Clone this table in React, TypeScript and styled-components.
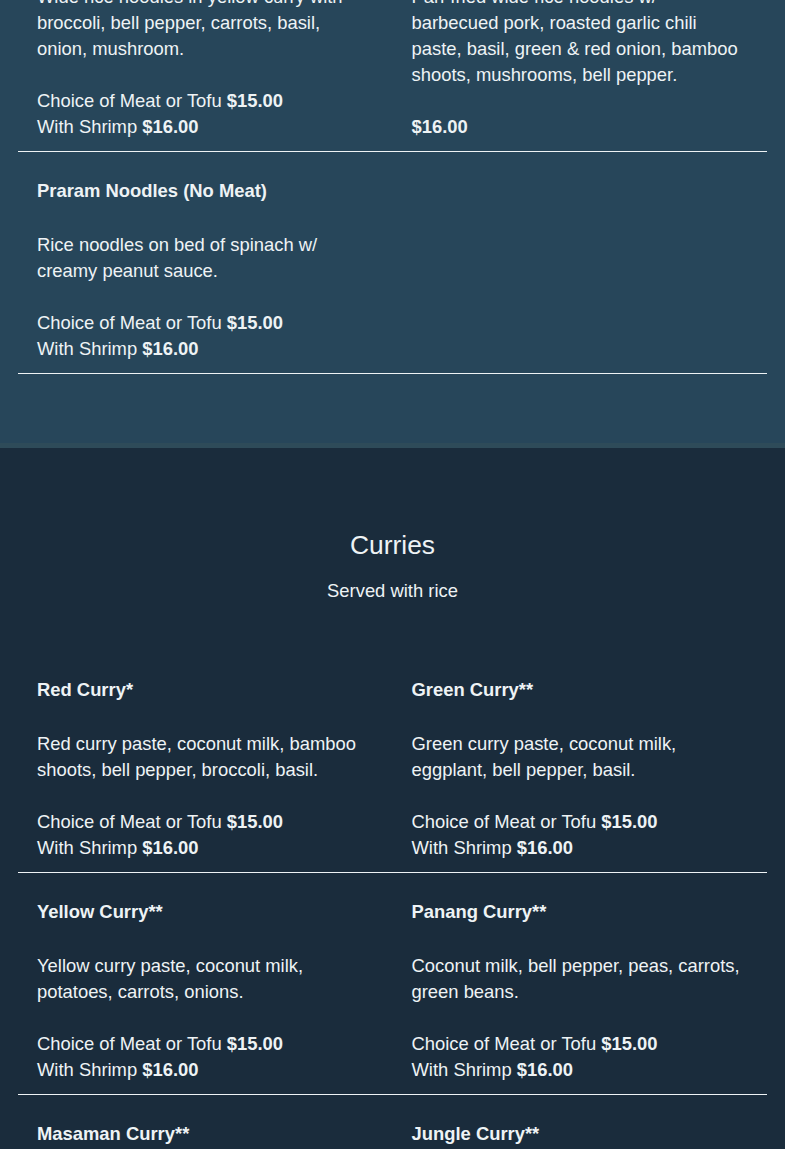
import React from 'react';
import styled, { createGlobalStyle } from 'styled-components';

interface Dish {
  name: string;
  desc: string;
  tofu?: string;
  shrimp?: string;
  only?: string;
}

const noodles: Dish[][] = [
  [
    {
      name: 'Curry Noodles',
      desc: 'Wide rice noodles in yellow curry with broccoli, bell pepper, carrots, basil, onion, mushroom.',
      tofu: '$15.00',
      shrimp: '$16.00'
    },
    {
      name: 'Drunken Noodles (Pad Kee Mao)',
      desc: 'Pan-fried wide rice noodles w/ barbecued pork, roasted garlic chili paste, basil, green & red onion, bamboo shoots, mushrooms, bell pepper.',
      only: '$16.00'
    }
  ],
  [
    {
      name: 'Praram Noodles (No Meat)',
      desc: 'Rice noodles on bed of spinach w/ creamy peanut sauce.',
      tofu: '$15.00',
      shrimp: '$16.00'
    }
  ]
];

const curries: Dish[][] = [
  [
    {
      name: 'Red Curry*',
      desc: 'Red curry paste, coconut milk, bamboo shoots, bell pepper, broccoli, basil.',
      tofu: '$15.00',
      shrimp: '$16.00'
    },
    {
      name: 'Green Curry**',
      desc: 'Green curry paste, coconut milk, eggplant, bell pepper, basil.',
      tofu: '$15.00',
      shrimp: '$16.00'
    }
  ],
  [
    {
      name: 'Yellow Curry**',
      desc: 'Yellow curry paste, coconut milk, potatoes, carrots, onions.',
      tofu: '$15.00',
      shrimp: '$16.00'
    },
    {
      name: 'Panang Curry**',
      desc: 'Coconut milk, bell pepper, peas, carrots, green beans.',
      tofu: '$15.00',
      shrimp: '$16.00'
    }
  ],
  [
    {
      name: 'Masaman Curry**',
      desc: 'Masaman curry paste, coconut milk, potatoes, onions, peanuts.',
      tofu: '$15.00',
      shrimp: '$16.00'
    },
    {
      name: 'Jungle Curry**',
      desc: 'Jungle curry paste, bamboo shoots, bell pepper, green beans, basil.',
      tofu: '$15.00',
      shrimp: '$16.00'
    }
  ]
];

const GlobalStyle = createGlobalStyle`
  html, body {
    margin: 0;
    padding: 0;
    background: #1a2c3c;
  }
  body {
    font-family: "Liberation Sans", Arial, sans-serif;
    color: #eef3f5;
    overflow: hidden;
  }
`;

const Section = styled.section<{ $tone: 'light' | 'dark' }>`
  background: ${(p) => (p.$tone === 'light' ? '#27465a' : '#1a2c3c')};
  border-bottom: ${(p) => (p.$tone === 'light' ? '5px solid #2e4b59' : 'none')};
  padding: ${(p) => (p.$tone === 'light' ? '0 18px 69px' : '82px 18px 0')};
  margin-top: ${(p) => (p.$tone === 'light' ? '-96px' : '0')};
`;

const Header = styled.header`
  text-align: center;
  margin-bottom: 47px;
`;

const Heading = styled.h2`
  margin: 0;
  font-size: 26.4px;
  line-height: 31px;
  font-weight: normal;
`;

const Sub = styled.p`
  margin: 17px 0 0;
  font-size: 18.4px;
  line-height: 26px;
`;

const Row = styled.div<{ $ruled: boolean }>`
  display: grid;
  grid-template-columns: 1fr 1fr;
  border-bottom: ${(p) => (p.$ruled ? '1px solid #eef3f5' : 'none')};
`;

const Item = styled.div`
  padding: 26px 19px 11px;
  font-size: 18.4px;
  line-height: 26px;
`;

const Name = styled.h4`
  margin: 0 0 28px;
  font-size: 18.4px;
  line-height: 26px;
  font-weight: bold;
`;

const Desc = styled.p`
  margin: 0 0 26px;
`;

const Price = styled.div`
  b {
    font-weight: bold;
  }
`;

function MenuItem ({ dish }: { dish: Dish }) {
  return (
    <Item>
      <Name>{dish.name}</Name>
      <Desc>{dish.desc}</Desc>
      {dish.only
        ? <Price><b>{dish.only}</b></Price>
        : (
          <>
            <Price>Choice of Meat or Tofu <b>{dish.tofu}</b></Price>
            <Price>With Shrimp <b>{dish.shrimp}</b></Price>
          </>
        )}
    </Item>
  );
}

export default function App () {
  return (
    <>
      <GlobalStyle />
      <Section $tone='light'>
        {noodles.map((row, i) => (
          <Row $ruled key={i}>
            {row.map((d) => <MenuItem dish={d} key={d.name} />)}
          </Row>
        ))}
      </Section>
      <Section $tone='dark'>
        <Header>
          <Heading>Curries</Heading>
          <Sub>Served with rice</Sub>
        </Header>
        {curries.map((row, i) => (
          <Row $ruled={i < curries.length - 1} key={i}>
            {row.map((d) => <MenuItem dish={d} key={d.name} />)}
          </Row>
        ))}
      </Section>
    </>
  );
}
